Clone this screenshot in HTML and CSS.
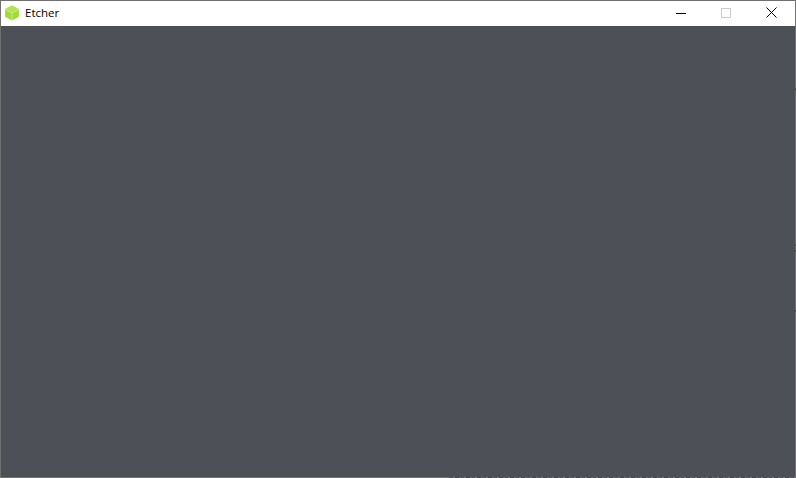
FILE: index.html
```html
<!DOCTYPE html>
<html lang="en">
<head>
<meta charset="utf-8">
<title>Etcher</title>
<link rel="stylesheet" href="styles.css">
</head>
<body>
<div class="window">
  <header class="titlebar">
    <svg class="app-icon" width="16" height="16" viewBox="0 0 16 16" aria-hidden="true">
      <path d="M8 .5 15 4.2V11.8L8 15.5 1 11.8V4.2Z" fill="#a2dc38"/>
      <path d="M8 .5 15 4.2 8 8 1 4.2Z" fill="#b4e352"/>
      <path d="M1 4.2 8 8 15 4.2M8 8V15.5" fill="none" stroke="#cdec8c" stroke-width="1"/>
    </svg>
    <span class="app-title">Etcher</span>
    <div class="controls">
      <div class="control">
        <svg width="10" height="10" viewBox="0 0 10 10" aria-hidden="true"><path d="M0 5.5H10" stroke="#000" stroke-width="1"/></svg>
      </div>
      <div class="control">
        <svg width="10" height="10" viewBox="0 0 10 10" aria-hidden="true"><rect x=".5" y=".5" width="9" height="9" fill="none" stroke="#ccc" stroke-width="1"/></svg>
      </div>
      <div class="control control-close">
        <svg width="11" height="11" viewBox="0 0 11 11" aria-hidden="true"><path d="M.5.5 10.5 10.5M10.5.5.5 10.5" stroke="#000" stroke-width="1"/></svg>
      </div>
    </div>
  </header>
  <main class="content"></main>
</div>
</body>
</html>
```
FILE: styles.css
```css
html, body {
  margin: 0;
  height: 100%;
  overflow: hidden;
}

.window {
  position: relative;
  box-sizing: border-box;
  height: 478px;
  display: flex;
  flex-direction: column;
  border: 1px solid #707070;
  background: #fff;
}

/* Noise left along the bottom edge of the captured window */
.window::after {
  content: "";
  position: absolute;
  left: 449px;
  right: -1px;
  bottom: -1px;
  height: 1px;
  background: repeating-linear-gradient(90deg, #55535f 0 3px, #7a7a7a 3px 5px, #45434f 5px 9px, #6c6c6c 9px 11px);
}

/* Small dark marks on the right edge of the captured window */
.window::before {
  content: "";
  position: absolute;
  top: 87px;
  right: -1px;
  width: 1px;
  height: 225px;
  background: linear-gradient(180deg,
    #4f4d57 0 3px, transparent 3px 156px,
    #55535f 156px 158px, transparent 158px 162px,
    #4f4d57 162px 164px, transparent 164px 222px,
    #4f4d57 222px 224px, transparent 224px);
}

.titlebar {
  flex: 0 0 25px;
  display: flex;
  align-items: center;
  padding: 0 0 2px 3px;
  box-sizing: border-box;
  background: #fff;
}

.app-icon {
  flex: none;
}

.app-title {
  margin-left: 5px;
  font: 11.5px/16px "Open Sans", "Noto Sans", sans-serif;
  color: #000;
}

.controls {
  margin-left: auto;
  display: flex;
  height: 100%;
}

.control {
  width: 45px;
  display: flex;
  align-items: center;
  justify-content: center;
}

.control-close {
  width: 47px;
}

.content {
  flex: 1;
  background: #4d5057;
}
```
